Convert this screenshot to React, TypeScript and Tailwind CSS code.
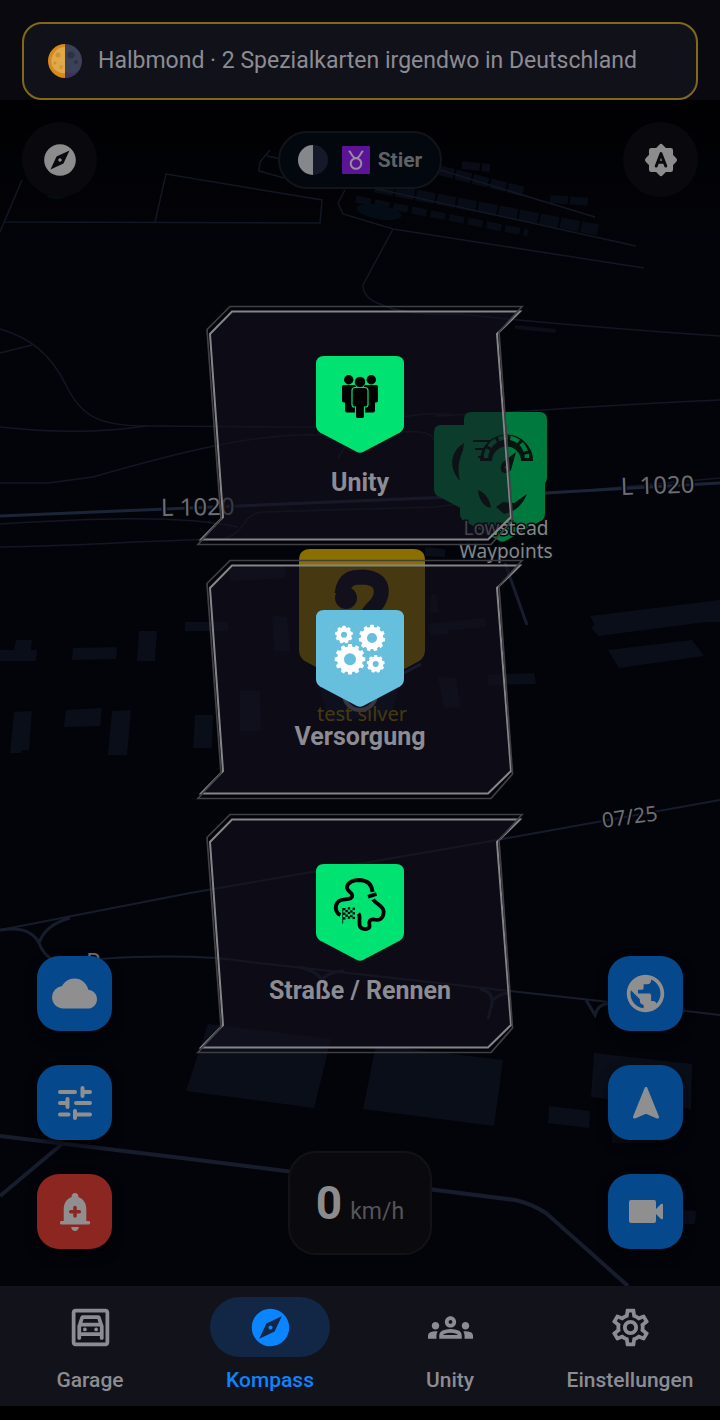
import type { ReactNode } from 'react';
import {
  MdCloud,
  MdExplore,
  MdOutlineGarage,
  MdOutlineGroups,
  MdOutlineSettings,
  MdPublic,
} from 'react-icons/md';

const SHIELD =
  'M8 0H80Q88 0 88 8V69Q88 74 84 76.500L47 96Q44 97.500 41 96L4 76.500Q0 74 0 69V8Q0 0 8 0Z';

function gearPath(cx: number, cy: number, r: number, hole: number, teeth: number) {
  const inner = r * 0.84;
  const step = (Math.PI * 2) / teeth;
  const pts: string[] = [];
  for (let i = 0; i < teeth; i++) {
    const a = i * step - Math.PI / 2;
    [
      [-0.33, inner],
      [-0.22, r],
      [0.22, r],
      [0.33, inner],
    ].forEach(([f, rad]) => {
      const t = a + f * step;
      pts.push(`${(cx + Math.cos(t) * rad).toFixed(2)} ${(cy + Math.sin(t) * rad).toFixed(2)}`);
    });
  }
  return `M${pts.join('L')}ZM${cx - hole} ${cy}a${hole} ${hole} 0 1 0 ${hole * 2} 0a${hole} ${hole} 0 1 0 ${-hole * 2} 0Z`;
}

function PeopleGlyph() {
  return (
    <g fill="#000">
      <circle cx="32.700" cy="23.700" r="4.700" />
      <circle cx="55.300" cy="23.700" r="4.700" />
      <path d="M27.500 29H40V56Q40 57 38 56.500H31Q29 56.500 29 54.500V46.500H28Q26 46.500 26 44.500V30.500Q26 29 27.500 29Z" />
      <path d="M60.500 29H48V56Q48 57 50 56.500H57Q59 56.500 59 54.500V46.500H60Q62 46.500 62 44.500V30.500Q62 29 60.500 29Z" />
      <path
        d="M39 31.500H49Q52 31.500 52 34.500V48.500Q52 51 49.500 51H48.500V60.500Q48.500 62.500 46.500 62.500H41.500Q39.500 62.500 39.500 60.500V51H38.500Q36 51 36 48.500V34.500Q36 31.500 39 31.500Z"
        stroke="#00e272"
        strokeWidth="1.200"
      />
      <circle cx="44" cy="26" r="5.600" stroke="#00e272" strokeWidth="0.800" />
    </g>
  );
}

function GearsGlyph() {
  return (
    <g fill="#fff" fillRule="evenodd">
      <path d={gearPath(28, 24.7, 9, 3, 9)} />
      <path d={gearPath(56, 28, 13.3, 5, 11)} />
      <path d={gearPath(34, 49.3, 15.4, 6, 12)} />
      <path d={gearPath(59.7, 54, 9, 3, 9)} />
    </g>
  );
}

function TrackGlyph() {
  const checks = [];
  for (let row = 0; row < 5; row++) {
    for (let col = 0; col < 5; col++) {
      if ((row + col) % 2 === 0) {
        checks.push(
          <rect key={`${row}-${col}`} x={27 + col * 2.4} y={44 + row * 2.3 - (col % 3) * 0.4} width="2.400" height="2.300" />,
        );
      }
    }
  }
  return (
    <g>
      <g fill="none" stroke="#000" strokeWidth="3.800">
        <path d="M24.500 51C20 49 18 43 21.500 38.500C25 33.500 32 37 35.500 33.500C39 29.500 31 27.500 31 23.500C31 18 38 16 43.500 16C52 16.500 56 21 56.500 28" />
        <path d="M52 32.700L60.500 30" />
        <path d="M57 35.500C60 40 67.500 42 67.700 47.500C67.500 56 62 56.500 58 55.500C54 55 52.500 57.500 53.500 61C54 64.500 51 65.300 48 65C42.500 64 43.500 60 43.500 56C43.500 53 44 51.500 42.500 49.500" />
      </g>
      <path d="M26.700 44V59.500" stroke="#000" strokeWidth="0.800" />
      {checks}
    </g>
  );
}

function CategoryCard({ label, color, children }: { label: string; color: string; children: ReactNode }) {
  return (
    <button type="button" className="relative flex h-[242px] w-[328px] flex-col items-center pt-[52px]">
      <svg viewBox="0 0 328 242" className="absolute inset-0 h-full w-full" fill="none" aria-hidden="true">
        <path
          d="M36 7.500H324L301 30L315 213L292 235.500H5L27 213L14 30Z"
          fill="#14121f"
          fillOpacity="0.580"
          stroke="#85858a"
          strokeWidth="2"
        />
        <path
          d="M34 2.500H326L303 28L316.500 216L295 240.500H2L25 215L11 25.500Z"
          stroke="#3f3f44"
          strokeWidth="1.700"
        />
      </svg>
      <svg viewBox="0 0 88 97" className="relative h-[97px] w-[88px]" aria-hidden="true">
        <path d={SHIELD} fill={color} />
        {children}
      </svg>
      <span className="relative mt-4 text-[25px] leading-7 font-bold text-[#8c8c93]">{label}</span>
    </button>
  );
}

function PinShield({ x, y, w, h, fill }: { x: number; y: number; w: number; h: number; fill: string }) {
  return <path d={SHIELD} transform={`translate(${x} ${y}) scale(${w / 88} ${h / 97})`} fill={fill} />;
}

function MapCanvas() {
  return (
    <svg
      viewBox="0 0 720 1420"
      preserveAspectRatio="xMidYMin slice"
      className="absolute inset-0 -z-10 h-full w-full"
      aria-hidden="true"
    >
      <defs>
        <linearGradient id="sky" x1="0" y1="0" x2="0" y2="1">
          <stop offset="0.070" stopColor="#010103" />
          <stop offset="0.200" stopColor="#03040a" />
        </linearGradient>
      </defs>
      <rect width="720" height="1420" fill="url(#sky)" />

      {/* buildings */}
      <g fill="#0a0e19">
        <path d="M0 652V650H14L16 640H32L31 650H37L36 661H0Z" />
        <path d="M73 648L117 647L116 659L72 660Z" />
        <path d="M139 631H157L155 661H137Z" />
        <path d="M185 622H228V631H185Z" />
        <path d="M14 712L32 711L29 750H22L21 753H10Z" />
        <path d="M66 710L102 708L100 726L64 727Z" />
        <path d="M112 711L131 710L127 755H108Z" />
        <path d="M195 715H213L212 748H193Z" />
        <path d="M229 568L285 566V578L230 581Z" />
        <path d="M272 616L287 617L290 651H275Z" />
        <path d="M240 691H260L261 731H240Z" />
        <path d="M428 624L485 618L486 627L448 630V634L430 635Z" />
        <path d="M438 677L456 678L460 707L444 708Z" />
        <path d="M487 675L534 673L536 684L489 685Z" />
        <path d="M431 595L436 594L439 612L430 614Z" />
        <path d="M590 616L720 600V622H706L598 636L591 627L595 625Z" />
        <path d="M608 650L692 640L704 656L619 668Z" />
        <path d="M515 325L556 329L555 333L515 329Z" />
        <path d="M208 1024L331 1039L314 1108L186 1091Z" />
        <path d="M376 1045L503 1060L494 1126L363 1109Z" />
        <path d="M594 1053L692 1064L691 1109L591 1097Z" />
        <path d="M549 1106L590 1111L589 1128L548 1123Z" />
        <path d="M612 1130H656V1143H612Z" />
        <path d="M682 1210L696 1211L695 1224H682Z" />
        <path d="M425 547L445 549V557L425 556Z" />
      </g>

      {/* allotment plots along the railway */}
      <g stroke="#080c16" fill="none">
        <path d="M438 170L525 192" strokeWidth="10" strokeDasharray="16 2" />
        <path d="M375 187L598 230" strokeWidth="11" strokeDasharray="19 2" />
        <path d="M356 199L528 233" strokeWidth="7" strokeDasharray="15 4" />
        <path d="M462 165L490 168M550 199L590 202" strokeWidth="8" strokeDasharray="18 2" />
      </g>
      <ellipse cx="379" cy="212" rx="23" ry="7" transform="rotate(10 379 212)" fill="#040d15" />
      <ellipse cx="57" cy="196" rx="10" ry="3" fill="#040d15" />

      {/* minor roads */}
      <g fill="none" stroke="#131724" strokeWidth="1.500">
        <path d="M22 180L0 232M5 222L320 223L322 200L166 174L155 222" />
        <path d="M270 150L260 162L259 171L284 178M267 156L300 163" />
        <path d="M345 190L338 203L343 214L393 229L644 268M350 183L636 246M440 170L595 217" />
        <path d="M393 229L363 285Q363 298 380 304Q405 316 460 314Q560 325 720 336" />
        <path d="M0 329C30 338 50 353 66 385C80 414 96 426 146 426L310 427C400 422 410 410 452 415" />
        <path d="M0 353L32 345M0 427Q80 436 146 426M0 483H48L93 477C190 449 260 433 320 435C380 436 430 424 434 440M434 416C530 412 600 405 720 400" />
        <path d="M0 524C80 519 180 514 237 527M0 547C90 546 150 540 222 539C247 534 240 515 262 512L434 507L545 494L720 478" />
        <path d="M338 458L348 442" />
      </g>
      {/* main road */}
      <path d="M0 516C200 506 400 500 545 493L720 483" fill="none" stroke="#1c2438" strokeWidth="3" />
      <path d="M0 930L190 893L480 843L720 800" fill="none" stroke="#161c2c" strokeWidth="2" />
      <g fill="none" stroke="#171d2d" strokeWidth="3">
        <path d="M0 930Q30 925 39 943Q43 955 56 962M39 943Q45 925 70 918" />
        <path d="M100 959Q190 953 250 962L600 1001L720 1015" strokeWidth="2" />
        <path d="M300 967Q318 972 322 980Q327 972 344 971M480 989Q494 992 492 1004L488 1019M492 1001Q500 993 510 993M586 1000L595 1015Q598 1004 608 1004" />
        <path d="M0 1136L190 1159L515 1200Q530 1203 546 1213L628 1286M0 1196L62 1144" strokeWidth="4" />
        <path d="M505 563L527 625" />
      </g>

      <g className="font-['Noto_Sans',sans-serif]" fill="#6b6d73" fontSize="24">
        <text x="161" y="516" transform="rotate(-1 161 516)" stroke="#03040a" strokeWidth="3" paintOrder="stroke">L 1020</text>
        <text x="621" y="495" transform="rotate(-2 621 495)" stroke="#03040a" strokeWidth="3" paintOrder="stroke">L 1020</text>
        <text x="603" y="828" transform="rotate(-8 603 828)" stroke="#03040a" strokeWidth="3" paintOrder="stroke" fontSize="21">07/25</text>
        <text x="86" y="970">P</text>
      </g>

      {/* waypoint pins */}
      <PinShield x={434} y={425} w={82} h={90} fill="#00793e" />
      <PinShield x={460} y={442} w={85} h={100} fill="#00793e" />
      <PinShield x={464} y={412} w={83} h={92} fill="#00793e" />
      <g fill="none" stroke="#04140e">
        <path d="M464 443L463 450C459 460 457 468 460 481C450 470 448 453 464 443Z" fill="#04140e" strokeWidth="0" />
        <path d="M486 461A20.500 20.500 0 0 1 527 461" strokeWidth="12" />
        <path d="M473 441H490M475 449H485M478 457H483" strokeWidth="2" />
        <path d="M478 490C486 493 490 500 491 508C484 507 479 500 478 490ZM496 507L503 502L514 503L527 494C522 506 514 512 504 514Z" fill="#04140e" strokeWidth="0" />
      </g>
      <path d="M486 458A20.500 20.500 0 0 1 527 458" fill="none" stroke="#00793e" strokeWidth="4.500" strokeDasharray="9 3" />
      <path d="M516 452L511 470Q507 475 502 472Q499 466 503 462ZM507 464L504 468L508 469Z" fill="#04140e" fillRule="evenodd" />
      <g
        className="font-['Noto_Sans',sans-serif]"
        fill="#85868a"
        stroke="#040a0c"
        strokeWidth="3"
        paintOrder="stroke"
        fontSize="19"
        textAnchor="middle"
      >
        <text x="506" y="535">Lowstead</text>
        <text x="506" y="558">Waypoints</text>
      </g>

      {/* silver test pin with the player marker under it */}
      <path d="M320 690L400 680L392 715L330 722Z" fill="#06101c" />
      <path d="M400 675L421 664" stroke="#1a2c44" strokeWidth="3" />
      <PinShield x={299} y={549} w={126} h={142} fill="#8b7000" />
      <circle cx="346" cy="598" r="11" fill="#100f18" />
      <path d="M342 594C344 577 354 577 363 577C386 578 384 596 375 606C368 612 366 617 365 630" fill="none" stroke="#100f18" strokeWidth="15" />
      <circle cx="360" cy="694" r="16" fill="#101a28" stroke="#6d6d70" strokeWidth="4" />
      <text
        x="362"
        y="721"
        className="font-['Noto_Sans',sans-serif]"
        fill="#8b7000"
        fontSize="20"
        textAnchor="middle"
      >
        test silver
      </text>
    </svg>
  );
}

function MoonEmoji() {
  return (
    <svg viewBox="0 0 34 34" className="h-[34px] w-[34px]" aria-hidden="true">
      <path d="M17 0A17 17 0 0 0 17 34Z" fill="#d8891c" />
      <path d="M17 3A14 14 0 0 0 6 25Q12 30 17 29Z" fill="#e0a94a" />
      <path d="M17 0A17 17 0 0 1 17 34Z" fill="#3d4157" />
      <circle cx="10" cy="11" r="2.500" fill="#cf9135" />
      <circle cx="7" cy="19" r="1.500" fill="#cf9135" />
      <circle cx="13" cy="23" r="2" fill="#d1983c" />
      <circle cx="23" cy="11" r="3.500" fill="#2d3147" />
      <circle cx="28" cy="18" r="2" fill="#2d3147" />
      <path d="M17 28Q24 31 30 27A17 17 0 0 1 17 34Z" fill="#41325c" />
    </svg>
  );
}

function TaurusIcon() {
  return (
    <svg viewBox="0 0 28 28" className="h-7 w-7" aria-hidden="true">
      <rect width="28" height="28" rx="1" fill="#5b1496" />
      <g fill="none" stroke="#96909c" strokeWidth="2" strokeLinecap="round">
        <circle cx="14" cy="17.500" r="5.300" />
        <path d="M7.500 5.500C9 6 10 12 14 12.200C18 12 19 6 20.500 5.500" />
      </g>
    </svg>
  );
}

function BrightnessAutoIcon() {
  return (
    <svg viewBox="0 0 24 24" className="h-[38px] w-[38px]" aria-hidden="true">
      <g fill="currentColor" stroke="currentColor" strokeWidth="3" strokeLinejoin="round">
        <path d="M12 3.400L14.500 5.900H18.100V9.500L20.600 12L18.100 14.500V18.100H14.500L12 20.600L9.500 18.100H5.900V14.500L3.400 12L5.900 9.500V5.900H9.500Z" />
      </g>
      <path d="M9 15.800L12 8L15 15.800M10 13.400H14" fill="none" stroke="#0a090d" strokeWidth="1.900" strokeLinecap="round" strokeLinejoin="round" />
    </svg>
  );
}

function TuneIcon() {
  return (
    <svg viewBox="0 0 34 34" className="h-[34px] w-[34px]" fill="none" stroke="currentColor" strokeWidth="4" strokeLinecap="round" aria-hidden="true">
      <path d="M2 6H17M24.500 2V10M27 6H32M2 17H8M9.500 13V21M18 17H32M2 28.500H10.500M17 25V32M19 28.500H32" />
    </svg>
  );
}

function AddAlertIcon() {
  return (
    <svg viewBox="0 0 30 38" className="h-[38px] w-[30px]" fill="currentColor" aria-hidden="true">
      <path d="M15 0A3.300 3.300 0 0 1 18.300 4Q26 7 26.300 15V28H28.500A1.700 1.700 0 0 1 28.500 31.500H1.500A1.700 1.700 0 0 1 1.500 28H3.700V15Q4 7 11.700 4A3.300 3.300 0 0 1 15 0ZM11 34H19Q18 38 15 38Q12 38 11 34Z" />
      <path d="M15 14.500V23M10.700 18.700H19.300" fill="none" stroke="#8c2620" strokeWidth="3.500" strokeLinecap="round" />
    </svg>
  );
}

function NavigationIcon() {
  return (
    <svg viewBox="0 0 28 34" className="h-[34px] w-7" aria-hidden="true">
      <path d="M14 2.500L25.500 31L14 26L2.500 31Z" fill="currentColor" stroke="currentColor" strokeWidth="3" strokeLinejoin="round" />
    </svg>
  );
}

function VideocamIcon() {
  return (
    <svg viewBox="0 0 34 24" className="h-6 w-[34px]" fill="currentColor" aria-hidden="true">
      <path d="M2 0H25Q27 0 27 2V9L32 4Q34 3 34 5V18Q34 20 32 19L27 14V21Q27 23 25 23H2Q0 23 0 21V2Q0 0 2 0Z" />
    </svg>
  );
}

function MapButton({ label, danger, children }: { label: string; danger?: boolean; children: ReactNode }) {
  return (
    <button
      type="button"
      aria-label={label}
      className={`flex h-[75px] w-[75px] items-center justify-center rounded-[22px] text-[#8f8f8f] shadow-[0_6px_12px_rgba(0,0,0,0.6)] ${
        danger ? 'bg-[#8c2620]' : 'bg-[#05498c]'
      }`}
    >
      {children}
    </button>
  );
}

const tabs = [
  { label: 'Garage', icon: MdOutlineGarage },
  { label: 'Kompass', icon: MdExplore, active: true },
  { label: 'Unity', icon: MdOutlineGroups },
  { label: 'Einstellungen', icon: MdOutlineSettings },
];

export default function App() {
  return (
    <div className="relative isolate flex min-h-screen flex-col bg-black font-['Roboto',sans-serif]">
      <MapCanvas />

      <header className="bg-[#09090f] px-[22px] pt-[22px]">
        <div className="flex h-[78px] items-center gap-4 rounded-[20px] border-2 border-[#80691a] bg-[#11111a] px-6">
          <MoonEmoji />
          <p className="text-[23px] leading-7 whitespace-nowrap text-[#8c8c93]">
            Halbmond · 2 Spezialkarten irgendwo in Deutschland
          </p>
        </div>
      </header>

      <main className="flex flex-1 flex-col justify-between">
        <div className="flex items-center justify-between px-[22px] pt-[22px]">
          <button
            type="button"
            aria-label="Kompass"
            className="flex h-[75px] w-[75px] items-center justify-center rounded-full bg-[#09090d] text-[#8c8c8c]"
          >
            <MdExplore className="h-[38px] w-[38px]" />
          </button>
          <div className="flex h-[58px] items-center gap-[14px] rounded-full border-2 border-[#11151a] bg-[#03070e] px-[18px]">
            <svg viewBox="0 0 30 30" className="h-[30px] w-[30px]" aria-hidden="true">
              <circle cx="15" cy="15" r="15" fill="#151a2b" />
              <path d="M15 0A15 15 0 0 0 15 30Z" fill="#85878b" />
            </svg>
            <div className="flex items-center gap-2">
              <TaurusIcon />
              <span className="text-[21px] leading-6 font-bold text-[#606165]">Stier</span>
            </div>
          </div>
          <button
            type="button"
            aria-label="Automatische Helligkeit"
            className="flex h-[75px] w-[75px] items-center justify-center rounded-full bg-[#09090d] text-[#8c8c8c]"
          >
            <BrightnessAutoIcon />
          </button>
        </div>

        <div className="flex items-end justify-between px-[37px] pb-[31px]">
          <div className="mb-[6px] flex flex-col gap-[34px]">
            <MapButton label="Wetter">
              <MdCloud className="h-[45px] w-[45px]" />
            </MapButton>
            <MapButton label="Filter">
              <TuneIcon />
            </MapButton>
            <MapButton label="Warnung melden" danger>
              <AddAlertIcon />
            </MapButton>
          </div>
          <div className="flex h-[104px] w-[144px] items-baseline justify-center gap-2 rounded-[28px] border-2 border-[#131217] bg-[#0a090d] pt-6">
            <span className="text-[46px] leading-[52px] font-bold text-[#8c8c8c]">0</span>
            <span className="text-[23px] leading-7 text-[#55555a]">km/h</span>
          </div>
          <div className="mb-[6px] flex flex-col gap-[34px]">
            <MapButton label="Globus">
              <MdPublic className="h-[45px] w-[45px]" />
            </MapButton>
            <MapButton label="Navigation">
              <NavigationIcon />
            </MapButton>
            <MapButton label="Kamera">
              <VideocamIcon />
            </MapButton>
          </div>
        </div>
      </main>

      {/* category menu floats over the map */}
      <div className="pointer-events-none absolute inset-x-0 top-[304px] flex flex-col items-center gap-3">
        <CategoryCard label="Unity" color="#00e272">
          <PeopleGlyph />
        </CategoryCard>
        <CategoryCard label="Versorgung" color="#66bfdc">
          <GearsGlyph />
        </CategoryCard>
        <CategoryCard label="Straße / Rennen" color="#00e272">
          <TrackGlyph />
        </CategoryCard>
      </div>

      <nav className="grid h-[120px] grid-cols-4 bg-[#12121a]">
        {tabs.map(({ label, icon: Icon, active }) => (
          <a
            key={label}
            href="#"
            className={`flex flex-col items-center pt-[11px] ${active ? 'text-[#0a84ff]' : 'text-[#8c8c93]'}`}
          >
            <span
              className={`flex h-[60px] w-[120px] items-center justify-center rounded-full ${active ? 'bg-[#112745]' : ''}`}
            >
              <Icon className="h-[45px] w-[45px]" />
            </span>
            <span className="mt-[11px] text-[21px] leading-6 font-medium">{label}</span>
          </a>
        ))}
      </nav>
      <div className="h-[14px] bg-black" />
    </div>
  );
}
